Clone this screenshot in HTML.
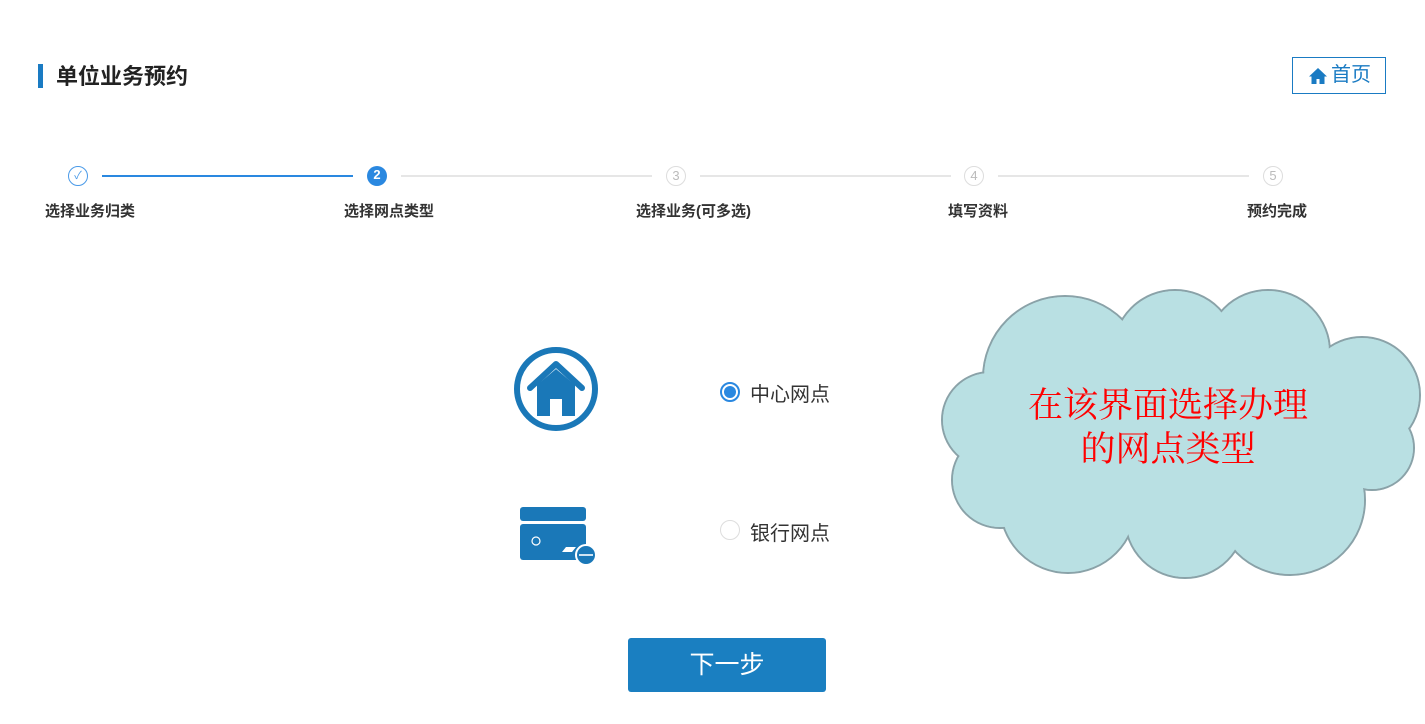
<!DOCTYPE html>
<html><head><meta charset="utf-8"><style>
body{margin:0;width:1425px;height:724px;background:#fff;position:relative;overflow:hidden;font-family:"Liberation Sans","Noto Sans CJK SC",sans-serif;}
.a{position:absolute;}
.title{left:38px;top:64px;border-left:5px solid #1a7bc3;height:24px;}
.title span{position:absolute;left:13px;top:-5px;font-size:22px;font-weight:bold;color:#222;white-space:nowrap;}
.home{left:1292px;top:57px;width:94px;height:37px;border:1px solid #1a7bc3;box-sizing:border-box;color:#1a7bc3;font-size:20px;line-height:35px;}
.line{height:2px;top:175px;}
.c{width:20px;height:20px;border-radius:50%;top:166px;box-sizing:border-box;text-align:center;font-size:13px;line-height:18px;}
.lbl{top:200px;font-size:15px;font-weight:bold;color:#333;white-space:nowrap;}
.radio{width:20px;height:20px;border-radius:50%;box-sizing:border-box;}
.rt{font-size:20px;color:#333;}
.btn{left:628px;top:638px;width:198px;height:54px;background:#1a7fc1;border-radius:3px;color:#fff;font-size:25px;text-align:center;line-height:54px;}
</style></head><body>
<div class="a title"><span>单位业务预约</span></div>
<div class="a home"><svg class="a" style="left:15px;top:9px" width="20" height="18" viewBox="0 0 20 18"><path d="M10 1L1 9.5h2.5V17h5v-5h3v5h5V9.5H19z" fill="#1a7bc3"/></svg><span class="a" style="left:38px;top:0">首页</span></div>

<div class="a line" style="left:102px;width:251px;background:#2a88e0"></div>
<div class="a line" style="left:401px;width:251px;background:#e6e6e6"></div>
<div class="a line" style="left:700px;width:251px;background:#e6e6e6"></div>
<div class="a line" style="left:998px;width:251px;background:#e6e6e6"></div>

<div class="a c" style="left:68px;border:1.5px solid #4a9ae8;color:#4a9ae8;font-size:11px">✓</div>
<div class="a c" style="left:367px;background:#2a88e0;color:#fff;font-weight:bold">2</div>
<div class="a c" style="left:666px;border:1.5px solid #ddd;color:#bbb">3</div>
<div class="a c" style="left:964px;border:1.5px solid #ddd;color:#bbb">4</div>
<div class="a c" style="left:1263px;border:1.5px solid #ddd;color:#bbb">5</div>

<div class="a lbl" style="left:45px">选择业务归类</div>
<div class="a lbl" style="left:344px">选择网点类型</div>
<div class="a lbl" style="left:636px">选择业务(可多选)</div>
<div class="a lbl" style="left:948px">填写资料</div>
<div class="a lbl" style="left:1247px">预约完成</div>

<svg class="a" style="left:513px;top:345px" width="86" height="88" viewBox="0 0 86 88">
<circle cx="43" cy="44" r="39" fill="none" stroke="#1a78b8" stroke-width="6"/>
<path d="M17 43L43 19L69 43" fill="none" stroke="#1a78b8" stroke-width="6" stroke-linecap="round" stroke-linejoin="round"/>
<path d="M24 40L43 24L62 40V71H49V54H37V71H24z" fill="#1a78b8"/>
</svg>

<svg class="a" style="left:518px;top:505px" width="80" height="62" viewBox="0 0 80 62">
<rect x="2" y="2" width="66" height="14" rx="3" fill="#1a78b8"/>
<rect x="2" y="19" width="66" height="36" rx="3" fill="#1a78b8"/>
<circle cx="18" cy="36" r="4" fill="none" stroke="#fff" stroke-width="1.2"/>
<path d="M44 47l4-5h10l-4 5z" fill="#fff"/>
<circle cx="68" cy="50" r="10" fill="#1a78b8" stroke="#fff" stroke-width="2"/>
<rect x="61" y="49" width="14" height="2" fill="#cfe3f2"/>
</svg>

<div class="a radio" style="left:720px;top:382px;border:2px solid #2a88e0;background:#fff"><div class="a" style="left:2px;top:2px;width:12px;height:12px;border-radius:50%;background:#2a88e0"></div></div>
<div class="a rt" style="left:750px;top:378px">中心网点</div>
<div class="a radio" style="left:720px;top:520px;border:1px solid #ddd"></div>
<div class="a rt" style="left:750px;top:517px">银行网点</div>

<div class="a btn">下一步</div>

<svg class="a" style="left:0;top:0" width="1425" height="724">
<g fill="#b9e0e3" stroke="#8aa2a8" stroke-width="2">
<circle cx="1065" cy="378" r="82"/><circle cx="1175" cy="352" r="62"/><circle cx="1268" cy="352" r="62"/>
<circle cx="1362" cy="395" r="58"/><circle cx="1372" cy="448" r="42"/><circle cx="1290" cy="500" r="75"/>
<circle cx="1185" cy="518" r="60"/><circle cx="1068" cy="505" r="68"/><circle cx="1000" cy="480" r="48"/><circle cx="990" cy="420" r="48"/>
</g>
<g fill="#b9e0e3">
<circle cx="1065" cy="378" r="81"/><circle cx="1175" cy="352" r="61"/><circle cx="1268" cy="352" r="61"/>
<circle cx="1362" cy="395" r="57"/><circle cx="1372" cy="448" r="41"/><circle cx="1290" cy="500" r="74"/>
<circle cx="1185" cy="518" r="59"/><circle cx="1068" cy="505" r="67"/><circle cx="1000" cy="480" r="47"/><circle cx="990" cy="420" r="47"/>
<rect x="1000" y="380" width="330" height="120"/>
</g>
<text x="1168" y="417" text-anchor="middle" font-family="'Liberation Serif','Noto Serif CJK SC',serif" font-size="35" fill="#f00">在该界面选择办理</text>
<text x="1168" y="461" text-anchor="middle" font-family="'Liberation Serif','Noto Serif CJK SC',serif" font-size="35" fill="#f00">的网点类型</text>
</svg>
</body></html>
